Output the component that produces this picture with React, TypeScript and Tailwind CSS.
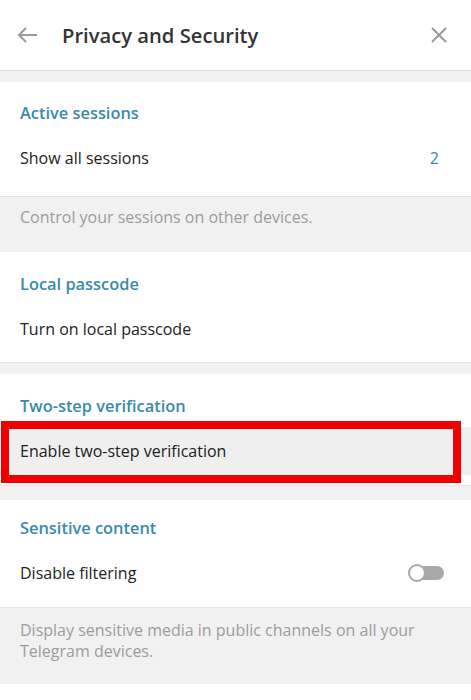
import { ReactNode } from 'react';

const font = { fontFamily: '"Open Sans", "Noto Sans", sans-serif' };

const Heading = ({ children }: { children: ReactNode }) => (
  <div className="px-5 h-[22px] flex items-center text-[16.4px] font-semibold text-[#3a8aab]">
    {children}
  </div>
);

const Note = ({ children }: { children: ReactNode }) => (
  <div className="bg-[#f1f1f1] border-t border-[#e3e3e3] px-5 text-[16px] leading-[21px] text-[#9c9c9c]">
    {children}
  </div>
);

const Toggle = () => (
  <div className="relative w-[36px] h-[18px] flex items-center">
    <div className="absolute left-[3px] right-0 h-[14px] rounded-full bg-[#a8a8a8]" />
    <div className="absolute left-0 w-[18px] h-[18px] rounded-full bg-white border-2 border-[#a8a8a8]" />
  </div>
);

export default function App() {
  return (
    <div className="w-[471px] h-[700px] overflow-hidden bg-white text-[#222]" style={font}>
      {/* header */}
      <div className="h-[71px] flex items-center border-b border-[#dcdcdc] px-[17px]">
        <svg width="21" height="16" viewBox="0 0 21 16" fill="none" stroke="#9a9a9a" strokeWidth="2">
          <path d="M20 8H2M9 1L2 8l7 7" />
        </svg>
        <div className="ml-[24px] text-[20.2px] font-semibold text-[#333] flex-1">Privacy and Security</div>
        <svg width="16" height="16" viewBox="0 0 16 16" stroke="#9a9a9a" strokeWidth="2" className="mr-[7px]">
          <path d="M1 1l14 14M15 1L1 15" />
        </svg>
      </div>
      <div className="h-[11px] bg-[#f1f1f1]" />

      {/* active sessions */}
      <div className="pt-[20px] pb-[15px]">
        <Heading>Active sessions</Heading>
        <div className="mt-[11px] h-[46px] px-5 flex items-center justify-between text-[16px]">
          <span>Show all sessions</span>
          <span className="text-[#3a8aab] mr-[12px]">2</span>
        </div>
      </div>
      <Note>
        <div className="pt-[9px] pb-[24px] leading-[22px]">Control your sessions on other devices.</div>
      </Note>

      {/* local passcode */}
      <div className="pt-[21px] pb-[10px]">
        <Heading>Local passcode</Heading>
        <div className="mt-[11px] h-[46px] px-5 flex items-center text-[16px]">Turn on local passcode</div>
      </div>
      <div className="h-[12px] bg-[#f1f1f1] border-t border-[#e3e3e3]" />

      {/* two-step verification */}
      <div className="pt-[21px] pb-[10px]">
        <Heading>Two-step verification</Heading>
        <div className="relative mt-[10px] h-[48px] px-5 flex items-center text-[16px] bg-[#efefef]">
          Enable two-step verification
          <div className="absolute left-[1px] top-[-6px] w-[460px] h-[62px] border-[8px] border-[#f00000]" />
        </div>
      </div>
      <div className="h-[15px] bg-[#f1f1f1] border-t border-[#e3e3e3]" />

      {/* sensitive content */}
      <div className="pt-[17px] pb-[11px]">
        <Heading>Sensitive content</Heading>
        <div className="mt-[11px] h-[46px] px-5 flex items-center justify-between text-[16px]">
          <span>Disable filtering</span>
          <span className="mr-[7px]">
            <Toggle />
          </span>
        </div>
      </div>
      <Note>
        <div className="pt-[12px] pb-[22px]">
          Display sensitive media in public channels on all your
          <br />
          Telegram devices.
        </div>
      </Note>
    </div>
  );
}
